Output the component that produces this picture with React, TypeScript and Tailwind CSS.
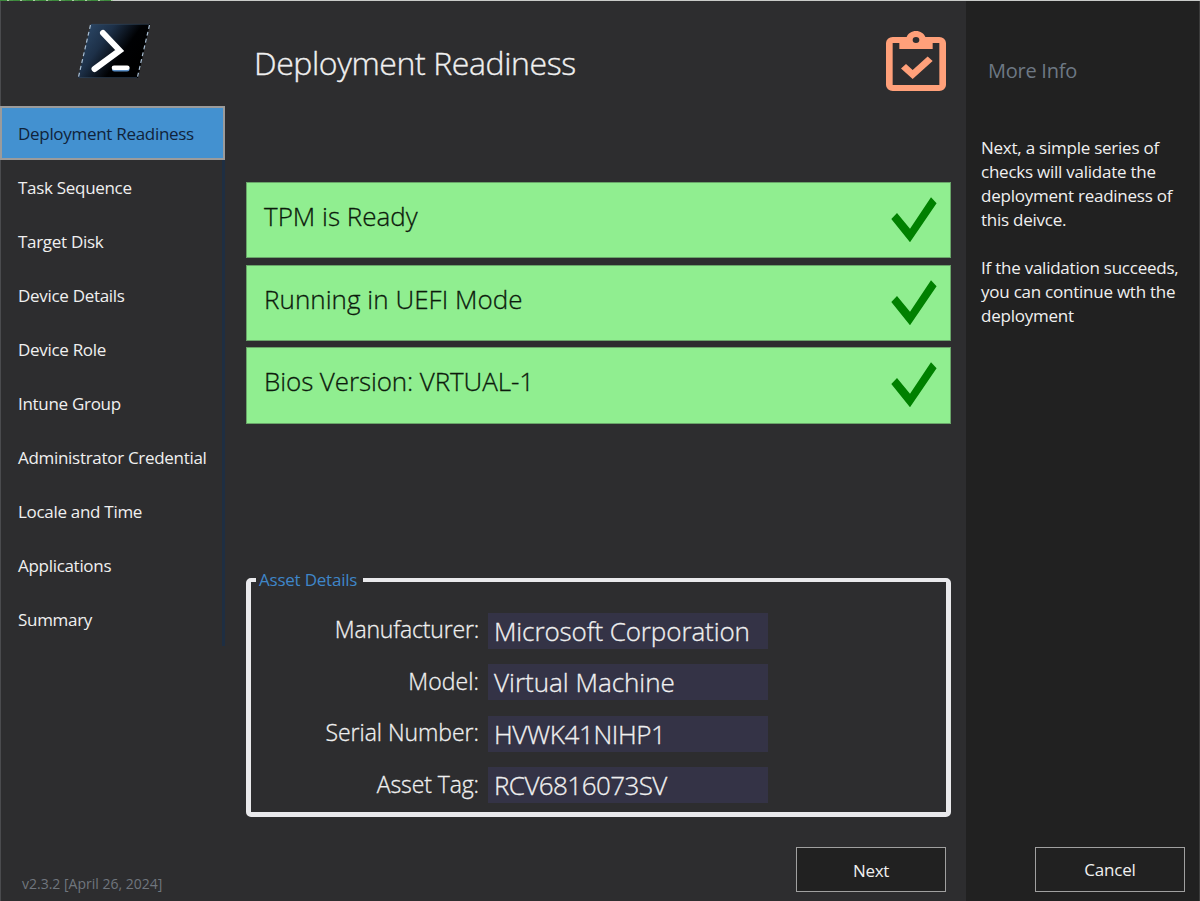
const navItems = [
  'Task Sequence',
  'Target Disk',
  'Device Details',
  'Device Role',
  'Intune Group',
  'Administrator Credential',
  'Locale and Time',
  'Applications',
  'Summary',
];

const checks = [
  { label: 'TPM is Ready', cls: 'h-[76px] tracking-[0px]' },
  { label: 'Running in UEFI Mode', cls: 'h-[76px] tracking-[0.04px]' },
  { label: 'Bios Version: VRTUAL-1', cls: 'h-[77px] tracking-[-0.1px]' },
];

const fields = [
  { label: 'Manufacturer:', labelCls: 'tracking-[-0.17px] pb-1', value: 'Microsoft Corporation', cls: 'tracking-[-0.1px]' },
  { label: 'Model:', labelCls: 'tracking-[0.05px] pb-0.5', value: 'Virtual Machine', cls: 'tracking-[0px]' },
  { label: 'Serial Number:', labelCls: 'tracking-[-0.03px] pb-[3px]', value: 'HVWK41NIHP1', cls: 'tracking-[-0.38px]' },
  { label: 'Asset Tag:', labelCls: 'tracking-[-0.1px] pb-0.5', value: 'RCV6816073SV', cls: 'tracking-[-0.58px]' },
];

function Logo() {
  return (
    <svg width="74" height="56" viewBox="77 23 74 56" fill="none">
      <defs>
        <linearGradient id="shell" x1="84" y1="28" x2="138" y2="66" gradientUnits="userSpaceOnUse">
          <stop offset="0" stopColor="#2c4867" />
          <stop offset="0.35" stopColor="#1d3048" />
          <stop offset="0.7" stopColor="#000103" />
          <stop offset="1" stopColor="#000" />
        </linearGradient>
      </defs>
      <path d="M91 24H150L138 78H78Z" fill="url(#shell)" />
      <path d="M90.5 25L78.5 77M149.5 25L137.5 77" stroke="#a9bfd4" strokeWidth="1.2" strokeDasharray="4 3" />
      <path d="M92 24.3H149M79 77.6H137" stroke="#34465a" strokeWidth="0.7" />
      <path d="M103 33L119.7 50.5L94.5 69" stroke="#fff" strokeWidth="6" strokeLinecap="round" strokeLinejoin="miter" />
      <path d="M114.5 69H127" stroke="#5b8fc6" strokeWidth="5" strokeLinecap="round" />
      <path d="M114 67.8H127.3" stroke="#fff" strokeWidth="4.6" strokeLinecap="round" />
    </svg>
  );
}

function ClipboardCheck() {
  return (
    <svg width="60" height="60" viewBox="3 1 18 20" preserveAspectRatio="none" fill="#ffa07a">
      <path d="M19,3H14.82C14.4,1.84 13.3,1 12,1C10.7,1 9.6,1.84 9.18,3H5A2,2 0 0,0 3,5V19A2,2 0 0,0 5,21H19A2,2 0 0,0 21,19V5A2,2 0 0,0 19,3M12,3A1,1 0 0,1 13,4A1,1 0 0,1 12,5A1,1 0 0,1 11,4A1,1 0 0,1 12,3M7,7H17V5H19V19H5V5H7V7M7.5,13.5L9,12L11,14L15.5,9.5L17,11L11,17L7.5,13.5Z" />
    </svg>
  );
}

function CheckMark() {
  return (
    <svg width="46" height="46" viewBox="0 0 46 46" fill="#008000">
      <path d="M0.3 22L6 16L19 31.7L40 0.2L45.6 6.3L19 45.2Z" />
    </svg>
  );
}

export default function App() {
  return (
    <div className="flex h-[901px] w-[1200px] flex-col overflow-hidden bg-[#2d2d2f] font-['Open_Sans','Noto_Sans',sans-serif] text-[#f0f0f0]">
      <div className="flex h-px bg-[#c9cbc9]">
        <div className="w-[113px] bg-[repeating-linear-gradient(90deg,#3c8a3c_0_7px,#a9cfa2_7px_9px,#4b9149_9px_13px)]" />
      </div>
      <div className="flex flex-1">
        <aside className="flex w-[240px] flex-col border-l border-[#4a4b4e]">
          <div className="flex h-[105px] pl-[76px] pt-[22px]">
            <Logo />
          </div>
          <nav className="flex w-[226px] flex-col text-[17px] tracking-[-0.3px]">
            <div className="-ml-px flex h-[54px] w-[225px] items-center border-2 border-[#9b9b9b] bg-[#4391d0] pl-4 pt-0.5 text-[#10233a]">
              <span>Deployment Readiness</span>
            </div>
            <div className="flex w-[224px] flex-col border-r-[3px] border-[#1e2e42]">
              {navItems.map((n) => (
                <div key={n} className="flex h-[54px] items-center whitespace-nowrap pl-[17px] pt-0.5">
                  <span>{n}</span>
                </div>
              ))}
            </div>
          </nav>
          <div className="mt-auto pb-[7px] pl-[21px] text-[14px] leading-5 text-[#70767e]">v2.3.2 [April 26, 2024]</div>
        </aside>

        <main className="flex w-[726px] flex-col pl-1.5 pr-[15px]">
          <header className="flex h-[181px] justify-between pl-2 pr-[5px] pt-[30px]">
            <h1 className="pt-2 text-[32px] font-light leading-[48px] tracking-[-0.4px] [-webkit-text-stroke:0.35px_currentColor]">Deployment Readiness</h1>
            <ClipboardCheck />
          </header>
          <section className="flex flex-col gap-[6.5px]">
            {checks.map((c) => (
              <div
                key={c.label}
                className={`flex shrink-0 justify-between border border-[#69a569] bg-[#90ee90] pl-[17px] pr-[13px] pt-[14px] text-[26px] font-light leading-[38px] text-[#0c1a0c] [-webkit-text-stroke:0.3px_currentColor] ${c.cls}`}
              >
                <span>{c.label}</span>
                <CheckMark />
              </div>
            ))}
          </section>
          <fieldset className="mt-[146px] h-[247px] w-[705px] rounded-[5px] border-[5px] border-t-4 border-[#e9e9ec] pl-[5px]">
            <legend className="h-5 px-[3px] pr-[6px] text-[17px] leading-5 tracking-[-0.22px] text-[#3f86c9]">Asset Details</legend>
            <div className="flex flex-col gap-[16px] pt-[23px]">
              {fields.map((f) => (
                <div key={f.label} className="flex h-[35.5px] items-center [-webkit-text-stroke:0.3px_currentColor]">
                  <span className={`w-[223px] text-right text-[23px] font-light leading-8 ${f.labelCls}`}>{f.label}</span>
                  <span className={`ml-[9px] h-9 w-[280px] whitespace-nowrap bg-[#343346] pl-1.5 text-[26px] font-light leading-[37px] ${f.cls}`}>{f.value}</span>
                </div>
              ))}
            </div>
          </fieldset>
          <div className="mb-[9px] mt-auto flex justify-end pr-[5px]">
            <button className="h-[45px] w-[150px] border border-[#a0a0a0] bg-[#212121] pt-0.5 text-[17px] tracking-[-0.3px]">Next</button>
          </div>
        </main>

        <aside className="flex w-[234px] flex-col border-r border-[#3c3c3c] bg-[#212121]">
          <h2 className="pl-[22px] pt-14 text-[20px] leading-7 tracking-[-0.25px] text-[#6d7884]">More Info</h2>
          <div className="flex flex-col gap-6 whitespace-nowrap pl-[15px] pt-[51px] text-[17px] leading-6 tracking-[-0.24px]">
            <p>Next, a simple series of<br />checks will validate the<br />deployment readiness of<br />this deivce.</p>
            <p>If the validation succeeds,<br />you can continue wth the<br />deployment</p>
          </div>
          <div className="mb-[9px] mt-auto flex justify-end pr-[14px]">
            <button className="h-[45px] w-[150px] border border-[#a0a0a0] bg-[#212121] text-[17px] tracking-[-0.2px]">Cancel</button>
          </div>
        </aside>
      </div>
    </div>
  );
}
